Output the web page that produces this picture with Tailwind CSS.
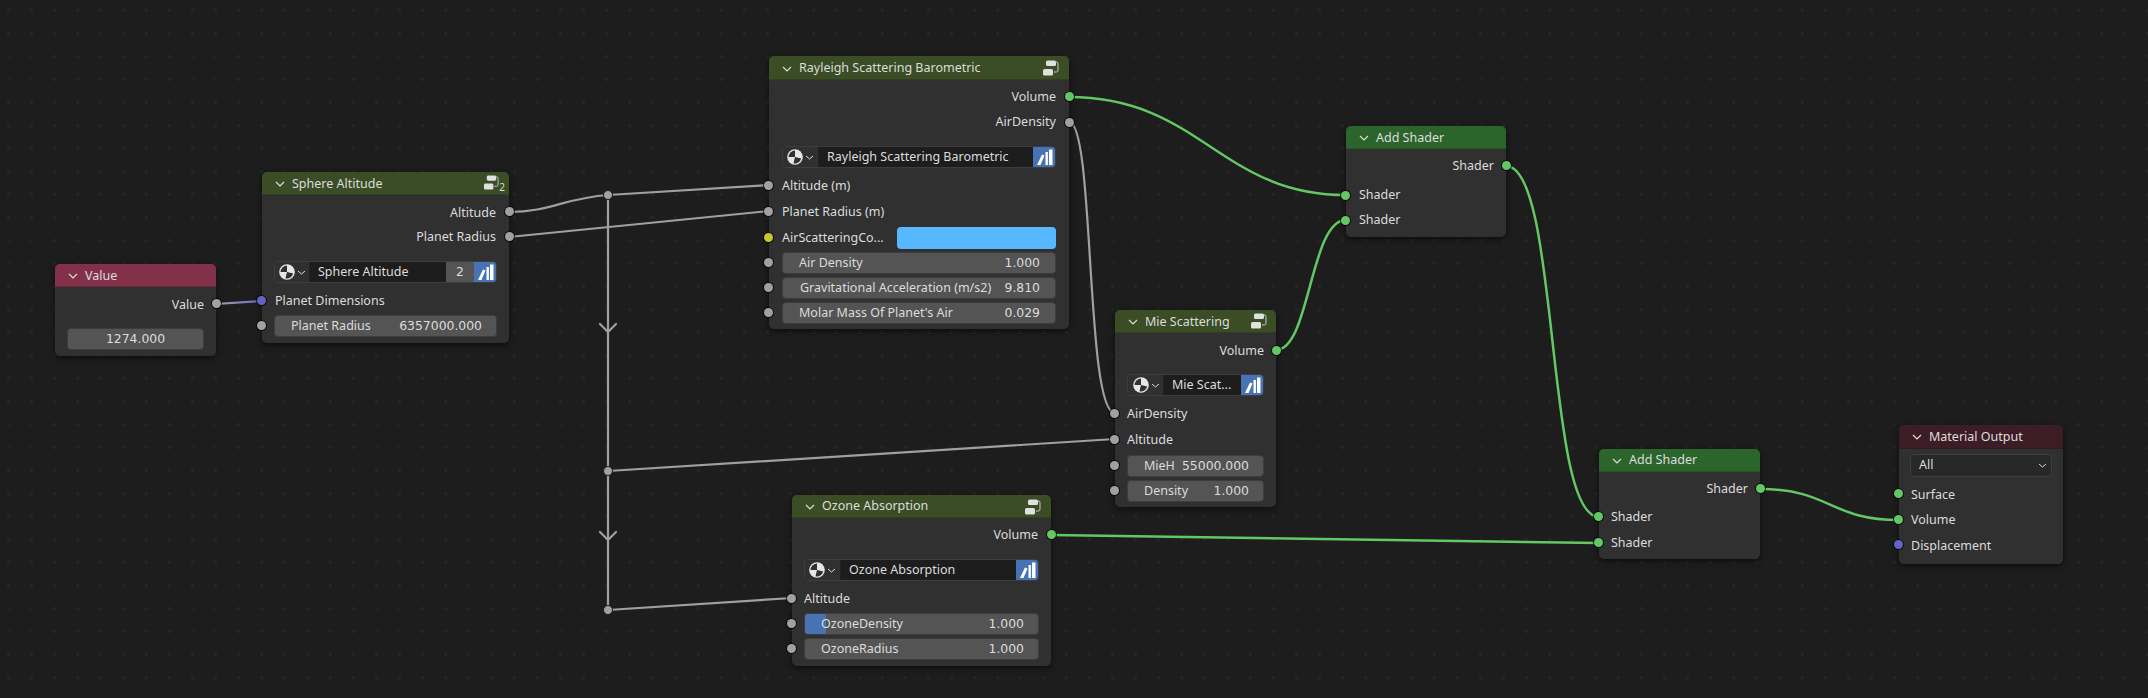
<!DOCTYPE html>
<html lang="en">
<head>
  <meta charset="UTF-8" />
  <title>Shader Nodes</title>
  <script src="https://cdn.jsdelivr.net/npm/@tailwindcss/browser@4"></script>
</head>
<body class="bg-[#1d1d1d] overflow-hidden font-['Noto_Sans',sans-serif] text-[12.5px] whitespace-nowrap text-[#dcdcdc]">
<!-- icons reused by every group node -->
<svg width="0" height="0" class="absolute">
  <defs>
    <g id="world">
      <circle cx="8" cy="8" r="7.8" fill="#e6e6e6"/>
      <path d="M8 1.6 A6.4 6.4 0 0 0 1.6 8 H8 Z" fill="#303030"/>
      <path d="M8 8 L14.2 9.6 A6.4 6.4 0 0 1 6.5 14.2 Z" fill="#303030"/>
    </g>
    <g id="fake">
      <path d="M2 16 L7 5.5 L9.5 6.5 L5.5 16 Z" fill="#fff"/>
      <rect x="10.5" y="3" width="2.4" height="13" fill="#fff"/>
      <rect x="14" y="0.5" width="3.5" height="15.5" fill="#fff"/>
    </g>
    <g id="dup" fill="none">
      <rect x="3" y="0.5" width="10" height="5.5" rx="1.5" fill="#e0e0e0"/>
      <rect x="0" y="9" width="10" height="6.5" rx="1.5" fill="#e0e0e0"/>
      <path d="M13 2 H14 Q15 2 15 4 V10 Q15 12 13.5 12 H11" stroke="#c8c8c8"/>
    </g>
  </defs>
</svg>

<div class="relative w-[2148px] h-[698px]">
  <!-- grid and wires -->
  <svg class="absolute inset-0" width="2148" height="698">
    <defs>
      <pattern id="dots" x="7" y="9" width="23" height="23" patternUnits="userSpaceOnUse">
        <rect width="3" height="3" fill="#252525"/>
      </pattern>
      <linearGradient id="valueWire" gradientUnits="userSpaceOnUse" x1="216" y1="304" x2="262" y2="301">
        <stop offset="0" stop-color="#a6a6a6"/><stop offset="1" stop-color="#6363c7"/>
      </linearGradient>
    </defs>
    <rect width="2148" height="698" fill="url(#dots)"/>
    <g fill="none" stroke-width="2.2" stroke-linecap="round">
      <g stroke="#a0a0a0">
        <path d="M608 195 V610"/>
        <path d="M600 324 L608 332 L616 324 M600 532 L608 540 L616 532"/>
        <path d="M509 212 C550 212 565 198 608 195"/>
        <path d="M608 195 L769 185"/>
        <path d="M509 237 L769 211"/>
        <path d="M608 471 L1115 439"/>
        <path d="M608 610 L792 598"/>
        <path d="M1069 122 C1095 122 1085 413 1115 413"/>
      </g>
      <path d="M216 304 L262 301" stroke="url(#valueWire)"/>
      <g stroke="#63c763" stroke-width="2.5">
        <path d="M1069 97 C1200 97 1220 195 1346 195"/>
        <path d="M1276 350 C1310 350 1310 220 1346 220"/>
        <path d="M1506 166 C1560 166 1545 517 1599 517"/>
        <path d="M1051 535 L1599 543"/>
        <path d="M1760 489 C1830 489 1830 520 1899 520"/>
      </g>
    </g>
    <circle cx="608" cy="195" r="4.5" fill="#a1a1a1" stroke="#1d1d1d"/>
    <circle cx="608" cy="471" r="4.5" fill="#a1a1a1" stroke="#1d1d1d"/>
    <circle cx="608" cy="610" r="4.5" fill="#a1a1a1" stroke="#1d1d1d"/>
  </svg>

  <!-- Value -->
  <div class="absolute left-[55px] top-[264px] w-[161px] h-[92px] rounded-[5px] bg-[#303030] shadow-[0_2px_6px_rgba(0,0,0,0.6)]">
    <div class="h-[23px] flex items-center gap-[7px] pl-[13px] pt-[2px] rounded-t-[5px] bg-[#83314a] border-b border-[#6f2a3f]">
      <svg width="10" height="6" viewBox="0 0 10 6"><path d="M1 1 L5 5 L9 1" fill="none" stroke="#dcdcdc" stroke-width="1.2"/></svg>
      <span>Value</span>
    </div>
    <div class="relative h-[34px] flex items-center justify-end pr-[12px] pt-[2px]">
      <span>Value</span>
      <i class="absolute right-[-5px] top-[12px] w-[9px] h-[9px] rounded-full bg-[#a1a1a1] ring-1 ring-black/70"></i>
    </div>
    <div class="mx-[12px] mt-[7px] h-[22px] rounded-[4px] bg-[#545454] flex items-center justify-center border border-[#3d3d3d] font-['DejaVu_Sans',sans-serif] text-[12.4px]">1274.000</div>
  </div>

  <!-- Sphere Altitude -->
  <div class="absolute left-[262px] top-[172px] w-[247px] h-[171px] rounded-[5px] bg-[#303030] shadow-[0_2px_6px_rgba(0,0,0,0.6)]">
    <div class="h-[23px] flex items-center gap-[7px] pl-[13px] pr-[4px] pt-[2px] rounded-t-[5px] bg-[#3a4d25] border-b border-[#2f3f20]">
      <svg width="10" height="6" viewBox="0 0 10 6"><path d="M1 1 L5 5 L9 1" fill="none" stroke="#dcdcdc" stroke-width="1.2"/></svg>
      <span>Sphere Altitude</span>
      <span class="ml-auto relative w-[21px] h-[18px]">
        <svg class="absolute left-0 top-0" width="15" height="15" viewBox="0 0 16 16"><use href="#dup"/></svg>
        <span class="absolute right-0 top-[6px] text-[10px] leading-[12px]">2</span>
      </span>
    </div>
    <div class="relative h-[33px] flex items-center justify-end pr-[13px] pt-[4px]">
      <span>Altitude</span>
      <i class="absolute right-[-5px] top-[12px] w-[9px] h-[9px] rounded-full bg-[#a1a1a1] ring-1 ring-black/70"></i>
    </div>
    <div class="relative h-[17px] flex items-center justify-end pr-[13px] pt-[2px]">
      <span>Planet Radius</span>
      <i class="absolute right-[-5px] top-[4px] w-[9px] h-[9px] rounded-full bg-[#a1a1a1] ring-1 ring-black/70"></i>
    </div>
    <div class="mx-[12px] mt-[16px] h-[22px] flex rounded-[4px] bg-[#282828] border border-[#3d3d3d] overflow-hidden">
      <span class="w-[35px] flex items-center gap-[2px] pl-[4px] bg-[#303030] border-r border-[#222]">
        <svg class="shrink-0" width="16" height="16" viewBox="0 0 16 16"><use href="#world"/></svg>
        <svg class="shrink-0" width="9" height="5" viewBox="0 0 9 5"><path d="M1 1 L4.5 4 L8 1" fill="none" stroke="#dcdcdc"/></svg>
      </span>
      <span class="flex-1 flex items-center pl-[8px] bg-[#1d1d1d]">Sphere Altitude</span>
      <span class="w-[28px] flex items-center justify-center bg-[#545454] font-['DejaVu_Sans',sans-serif] text-[12.4px]">2</span>
      <span class="w-[22px] flex items-center justify-center bg-[#4772b3]"><svg width="18" height="17" viewBox="0 0 18 17"><use href="#fake"/></svg></span>
    </div>
    <div class="relative mt-[7px] h-[22px] flex items-center pl-[13px]">
      <span>Planet Dimensions</span>
      <i class="absolute left-[-5px] top-[6px] w-[9px] h-[9px] rounded-full bg-[#6363c7] ring-1 ring-black/70"></i>
    </div>
    <div class="relative mx-[12px] mt-[3px] h-[22px] rounded-[4px] bg-[#545454] border border-[#3d3d3d] flex items-center justify-between pl-[16px] pr-[14px]">
      <span>Planet Radius</span><span class="font-['DejaVu_Sans',sans-serif] text-[12.4px]">6357000.000</span>
      <i class="absolute left-[-18px] top-[5px] w-[9px] h-[9px] rounded-full bg-[#a1a1a1] ring-1 ring-black/70"></i>
    </div>
  </div>

  <!-- Rayleigh Scattering Barometric -->
  <div class="absolute left-[769px] top-[56px] w-[300px] h-[273px] rounded-[5px] bg-[#303030] shadow-[0_2px_6px_rgba(0,0,0,0.6)]">
    <div class="h-[24px] flex items-center gap-[7px] pl-[13px] pr-[10px] pt-[2px] rounded-t-[5px] bg-[#3a4d25] border-b border-[#2f3f20]">
      <svg width="10" height="6" viewBox="0 0 10 6"><path d="M1 1 L5 5 L9 1" fill="none" stroke="#dcdcdc" stroke-width="1.2"/></svg>
      <span>Rayleigh Scattering Barometric</span>
      <svg class="ml-auto -mt-[2px]" width="16" height="16" viewBox="0 0 16 16"><use href="#dup"/></svg>
    </div>
    <div class="relative h-[33px] flex items-center justify-end pr-[13px] pt-[1px]">
      <span>Volume</span>
      <i class="absolute right-[-5px] top-[12px] w-[9px] h-[9px] rounded-full bg-[#63c763] ring-1 ring-black/70"></i>
    </div>
    <div class="relative h-[19px] flex items-center justify-end pr-[13px]">
      <span>AirDensity</span>
      <i class="absolute right-[-5px] top-[5px] w-[9px] h-[9px] rounded-full bg-[#a1a1a1] ring-1 ring-black/70"></i>
    </div>
    <div class="mx-[13px] mt-[14px] h-[22px] flex rounded-[4px] bg-[#282828] border border-[#3d3d3d] overflow-hidden">
      <span class="w-[36px] flex items-center gap-[2px] pl-[4px] bg-[#303030] border-r border-[#222]">
        <svg class="shrink-0" width="16" height="16" viewBox="0 0 16 16"><use href="#world"/></svg>
        <svg class="shrink-0" width="9" height="5" viewBox="0 0 9 5"><path d="M1 1 L4.5 4 L8 1" fill="none" stroke="#dcdcdc"/></svg>
      </span>
      <span class="flex-1 flex items-center pl-[8px] bg-[#1d1d1d]">Rayleigh Scattering Barometric</span>
      <span class="w-[22px] flex items-center justify-center bg-[#4772b3]"><svg width="18" height="17" viewBox="0 0 18 17"><use href="#fake"/></svg></span>
    </div>
    <div class="relative mt-[7px] h-[22px] flex items-center pl-[13px]">
      <span>Altitude (m)</span>
      <i class="absolute left-[-5px] top-[6px] w-[9px] h-[9px] rounded-full bg-[#a1a1a1] ring-1 ring-black/70"></i>
    </div>
    <div class="relative mt-[4px] h-[22px] flex items-center pl-[13px]">
      <span>Planet Radius (m)</span>
      <i class="absolute left-[-5px] top-[6px] w-[9px] h-[9px] rounded-full bg-[#a1a1a1] ring-1 ring-black/70"></i>
    </div>
    <div class="relative mt-[4px] h-[22px] flex items-center pl-[13px]">
      <span>AirScatteringCo...</span>
      <span class="absolute left-[128px] top-0 w-[159px] h-[22px] rounded-[4px] bg-[#57b7ff]"></span>
      <i class="absolute left-[-5px] top-[6px] w-[9px] h-[9px] rounded-full bg-[#c7c729] ring-1 ring-black/70"></i>
    </div>
    <div class="relative mx-[13px] mt-[3px] h-[22px] rounded-[4px] bg-[#545454] border border-[#3d3d3d] flex items-center justify-between pl-[16px] pr-[15px]">
      <span>Air Density</span><span class="font-['DejaVu_Sans',sans-serif] text-[12.4px]">1.000</span>
      <i class="absolute left-[-19px] top-[5px] w-[9px] h-[9px] rounded-full bg-[#a1a1a1] ring-1 ring-black/70"></i>
    </div>
    <div class="relative mx-[13px] mt-[3px] h-[22px] rounded-[4px] bg-[#545454] border border-[#3d3d3d] flex items-center justify-between pl-[17px] pr-[15px]">
      <span>Gravitational Acceleration (m/s2)</span><span class="font-['DejaVu_Sans',sans-serif] text-[12.4px]">9.810</span>
      <i class="absolute left-[-19px] top-[5px] w-[9px] h-[9px] rounded-full bg-[#a1a1a1] ring-1 ring-black/70"></i>
    </div>
    <div class="relative mx-[13px] mt-[3px] h-[22px] rounded-[4px] bg-[#545454] border border-[#3d3d3d] flex items-center justify-between pl-[16px] pr-[15px]">
      <span>Molar Mass Of Planet's Air</span><span class="font-['DejaVu_Sans',sans-serif] text-[12.4px]">0.029</span>
      <i class="absolute left-[-19px] top-[5px] w-[9px] h-[9px] rounded-full bg-[#a1a1a1] ring-1 ring-black/70"></i>
    </div>
  </div>

  <!-- Ozone Absorption -->
  <div class="absolute left-[792px] top-[495px] w-[259px] h-[171px] rounded-[5px] bg-[#303030] shadow-[0_2px_6px_rgba(0,0,0,0.6)]">
    <div class="h-[23px] flex items-center gap-[7px] pl-[13px] pr-[10px] pt-[1px] rounded-t-[5px] bg-[#3a4d25] border-b border-[#2f3f20]">
      <svg width="10" height="6" viewBox="0 0 10 6"><path d="M1 1 L5 5 L9 1" fill="none" stroke="#dcdcdc" stroke-width="1.2"/></svg>
      <span>Ozone Absorption</span>
      <svg class="ml-auto" width="16" height="16" viewBox="0 0 16 16"><use href="#dup"/></svg>
    </div>
    <div class="relative h-[34px] flex items-center justify-end pr-[13px]">
      <span>Volume</span>
      <i class="absolute right-[-5px] top-[12px] w-[9px] h-[9px] rounded-full bg-[#63c763] ring-1 ring-black/70"></i>
    </div>
    <div class="mx-[12px] mt-[7px] h-[22px] flex rounded-[4px] bg-[#282828] border border-[#3d3d3d] overflow-hidden">
      <span class="w-[36px] flex items-center gap-[2px] pl-[4px] bg-[#303030] border-r border-[#222]">
        <svg class="shrink-0" width="16" height="16" viewBox="0 0 16 16"><use href="#world"/></svg>
        <svg class="shrink-0" width="9" height="5" viewBox="0 0 9 5"><path d="M1 1 L4.5 4 L8 1" fill="none" stroke="#dcdcdc"/></svg>
      </span>
      <span class="flex-1 flex items-center pl-[8px] bg-[#1d1d1d]">Ozone Absorption</span>
      <span class="w-[22px] flex items-center justify-center bg-[#4772b3]"><svg width="18" height="17" viewBox="0 0 18 17"><use href="#fake"/></svg></span>
    </div>
    <div class="relative mt-[7px] h-[22px] flex items-center pl-[12px]">
      <span>Altitude</span>
      <i class="absolute left-[-5px] top-[6px] w-[9px] h-[9px] rounded-full bg-[#a1a1a1] ring-1 ring-black/70"></i>
    </div>
    <div class="relative mx-[12px] mt-[3px] h-[22px] rounded-[4px] bg-[#545454] border border-[#3d3d3d] flex items-center justify-between pl-[16px] pr-[14px]">
      <span class="absolute left-0 top-0 w-[21px] h-full rounded-l-[3px] bg-[#4772b3]"></span>
      <span class="relative">OzoneDensity</span><span class="font-['DejaVu_Sans',sans-serif] text-[12.4px]">1.000</span>
      <i class="absolute left-[-18px] top-[5px] w-[9px] h-[9px] rounded-full bg-[#a1a1a1] ring-1 ring-black/70"></i>
    </div>
    <div class="relative mx-[12px] mt-[3px] h-[22px] rounded-[4px] bg-[#545454] border border-[#3d3d3d] flex items-center justify-between pl-[16px] pr-[14px]">
      <span>OzoneRadius</span><span class="font-['DejaVu_Sans',sans-serif] text-[12.4px]">1.000</span>
      <i class="absolute left-[-18px] top-[5px] w-[9px] h-[9px] rounded-full bg-[#a1a1a1] ring-1 ring-black/70"></i>
    </div>
  </div>

  <!-- Mie Scattering -->
  <div class="absolute left-[1115px] top-[310px] w-[161px] h-[197px] rounded-[5px] bg-[#303030] shadow-[0_2px_6px_rgba(0,0,0,0.6)]">
    <div class="h-[23px] flex items-center gap-[7px] pl-[13px] pr-[9px] pt-[2px] rounded-t-[5px] bg-[#3a4d25] border-b border-[#2f3f20]">
      <svg width="10" height="6" viewBox="0 0 10 6"><path d="M1 1 L5 5 L9 1" fill="none" stroke="#dcdcdc" stroke-width="1.2"/></svg>
      <span>Mie Scattering</span>
      <svg class="ml-auto -mt-[2px]" width="16" height="16" viewBox="0 0 16 16"><use href="#dup"/></svg>
    </div>
    <div class="relative h-[34px] flex items-center justify-end pr-[12px] pt-[3px]">
      <span>Volume</span>
      <i class="absolute right-[-5px] top-[13px] w-[9px] h-[9px] rounded-full bg-[#63c763] ring-1 ring-black/70"></i>
    </div>
    <div class="mx-[12px] mt-[7px] h-[22px] flex rounded-[4px] bg-[#282828] border border-[#3d3d3d] overflow-hidden">
      <span class="w-[36px] flex items-center gap-[2px] pl-[5px] bg-[#303030] border-r border-[#222]">
        <svg class="shrink-0" width="16" height="16" viewBox="0 0 16 16"><use href="#world"/></svg>
        <svg class="shrink-0" width="9" height="5" viewBox="0 0 9 5"><path d="M1 1 L4.5 4 L8 1" fill="none" stroke="#dcdcdc"/></svg>
      </span>
      <span class="flex-1 flex items-center pl-[8px] bg-[#1d1d1d]">Mie Scat...</span>
      <span class="w-[22px] flex items-center justify-center bg-[#4772b3]"><svg width="18" height="17" viewBox="0 0 18 17"><use href="#fake"/></svg></span>
    </div>
    <div class="relative mt-[7px] h-[22px] flex items-center pl-[12px]">
      <span>AirDensity</span>
      <i class="absolute left-[-5px] top-[6px] w-[9px] h-[9px] rounded-full bg-[#a1a1a1] ring-1 ring-black/70"></i>
    </div>
    <div class="relative mt-[4px] h-[22px] flex items-center pl-[12px]">
      <span>Altitude</span>
      <i class="absolute left-[-5px] top-[6px] w-[9px] h-[9px] rounded-full bg-[#a1a1a1] ring-1 ring-black/70"></i>
    </div>
    <div class="relative mx-[12px] mt-[4px] h-[22px] rounded-[4px] bg-[#545454] border border-[#3d3d3d] flex items-center justify-between pl-[16px] pr-[14px]">
      <span>MieH</span><span class="font-['DejaVu_Sans',sans-serif] text-[12.4px]">55000.000</span>
      <i class="absolute left-[-18px] top-[5px] w-[9px] h-[9px] rounded-full bg-[#a1a1a1] ring-1 ring-black/70"></i>
    </div>
    <div class="relative mx-[12px] mt-[3px] h-[22px] rounded-[4px] bg-[#545454] border border-[#3d3d3d] flex items-center justify-between pl-[16px] pr-[14px]">
      <span>Density</span><span class="font-['DejaVu_Sans',sans-serif] text-[12.4px]">1.000</span>
      <i class="absolute left-[-18px] top-[5px] w-[9px] h-[9px] rounded-full bg-[#a1a1a1] ring-1 ring-black/70"></i>
    </div>
  </div>

  <!-- Add Shader (top) -->
  <div class="absolute left-[1346px] top-[126px] w-[160px] h-[111px] rounded-[5px] bg-[#303030] shadow-[0_2px_6px_rgba(0,0,0,0.6)]">
    <div class="h-[23px] flex items-center gap-[7px] pl-[13px] pt-[2px] rounded-t-[5px] bg-[#2c652c] border-b border-[#265526]">
      <svg width="10" height="6" viewBox="0 0 10 6"><path d="M1 1 L5 5 L9 1" fill="none" stroke="#dcdcdc" stroke-width="1.2"/></svg>
      <span>Add Shader</span>
    </div>
    <div class="relative h-[34px] flex items-center justify-end pr-[12px]">
      <span>Shader</span>
      <i class="absolute right-[-5px] top-[12px] w-[9px] h-[9px] rounded-full bg-[#63c763] ring-1 ring-black/70"></i>
    </div>
    <div class="relative mt-[1px] h-[22px] flex items-center pl-[13px]">
      <span>Shader</span>
      <i class="absolute left-[-5px] top-[7px] w-[9px] h-[9px] rounded-full bg-[#63c763] ring-1 ring-black/70"></i>
    </div>
    <div class="relative mt-[3px] h-[22px] flex items-center pl-[13px]">
      <span>Shader</span>
      <i class="absolute left-[-5px] top-[7px] w-[9px] h-[9px] rounded-full bg-[#63c763] ring-1 ring-black/70"></i>
    </div>
  </div>

  <!-- Add Shader (bottom) -->
  <div class="absolute left-[1599px] top-[449px] w-[161px] h-[110px] rounded-[5px] bg-[#303030] shadow-[0_2px_6px_rgba(0,0,0,0.6)]">
    <div class="h-[23px] flex items-center gap-[7px] pl-[13px] pt-[1px] rounded-t-[5px] bg-[#2c652c] border-b border-[#265526]">
      <svg width="10" height="6" viewBox="0 0 10 6"><path d="M1 1 L5 5 L9 1" fill="none" stroke="#dcdcdc" stroke-width="1.2"/></svg>
      <span>Add Shader</span>
    </div>
    <div class="relative h-[34px] flex items-center justify-end pr-[12px]">
      <span>Shader</span>
      <i class="absolute right-[-5px] top-[12px] w-[9px] h-[9px] rounded-full bg-[#63c763] ring-1 ring-black/70"></i>
    </div>
    <div class="relative h-[22px] flex items-center pl-[12px]">
      <span>Shader</span>
      <i class="absolute left-[-5px] top-[6px] w-[9px] h-[9px] rounded-full bg-[#63c763] ring-1 ring-black/70"></i>
    </div>
    <div class="relative mt-[4px] h-[22px] flex items-center pl-[12px]">
      <span>Shader</span>
      <i class="absolute left-[-5px] top-[6px] w-[9px] h-[9px] rounded-full bg-[#63c763] ring-1 ring-black/70"></i>
    </div>
  </div>

  <!-- Material Output -->
  <div class="absolute left-[1899px] top-[425px] w-[164px] h-[139px] rounded-[5px] bg-[#303030] shadow-[0_2px_6px_rgba(0,0,0,0.6)]">
    <div class="h-[24px] flex items-center gap-[7px] pl-[13px] pt-[1px] rounded-t-[5px] bg-[#3c1d26] border-b border-[#331920]">
      <svg width="10" height="6" viewBox="0 0 10 6"><path d="M1 1 L5 5 L9 1" fill="none" stroke="#dcdcdc" stroke-width="1.2"/></svg>
      <span>Material Output</span>
    </div>
    <div class="mx-[11px] mt-[5px] h-[23px] rounded-[4px] bg-[#282828] border border-[#3d3d3d] flex items-center justify-between pl-[8px] pr-[4px]">
      <span>All</span>
      <svg width="9" height="5" viewBox="0 0 9 5"><path d="M1 1 L4.5 4 L8 1" fill="none" stroke="#dcdcdc"/></svg>
    </div>
    <div class="relative mt-[7px] h-[22px] flex items-center pl-[12px]">
      <span>Surface</span>
      <i class="absolute left-[-5px] top-[5px] w-[9px] h-[9px] rounded-full bg-[#63c763] ring-1 ring-black/70"></i>
    </div>
    <div class="relative mt-[3px] h-[22px] flex items-center pl-[12px]">
      <span>Volume</span>
      <i class="absolute left-[-5px] top-[6px] w-[9px] h-[9px] rounded-full bg-[#63c763] ring-1 ring-black/70"></i>
    </div>
    <div class="relative mt-[4px] h-[22px] flex items-center pl-[12px]">
      <span>Displacement</span>
      <i class="absolute left-[-5px] top-[5px] w-[9px] h-[9px] rounded-full bg-[#6363c7] ring-1 ring-black/70"></i>
    </div>
  </div>
</div>
</body>
</html>
